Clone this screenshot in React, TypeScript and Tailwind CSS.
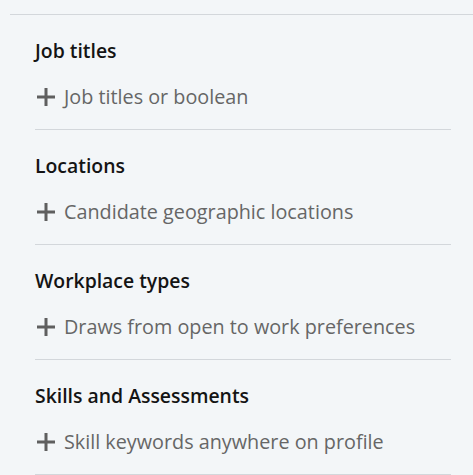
import React from "react";

const sections = [
  { title: "Job titles", hint: "Job titles or boolean" },
  { title: "Locations", hint: "Candidate geographic locations" },
  { title: "Workplace types", hint: "Draws from open to work preferences" },
  { title: "Skills and Assessments", hint: "Skill keywords anywhere on profile" },
];

function Plus() {
  return (
    <svg width="18" height="18" viewBox="0 0 18 18" className="shrink-0">
      <rect x="0" y="7.5" width="18" height="3" fill="#5f5f5f" />
      <rect x="7.5" y="0" width="3" height="18" fill="#5f5f5f" />
    </svg>
  );
}

export default function App() {
  return (
    <div
      className="h-[475px] w-[473px] overflow-hidden bg-[#f3f6f8] pt-[14px] pl-[10px]"
      style={{ fontFamily: '"Open Sans", "Noto Sans", sans-serif' }}
    >
      <div className="border-t border-[#d3d7db] pl-[25px] pr-[22px]">
        {sections.map((s) => (
          <div key={s.title} className="h-[115px] border-b border-[#d3d7db] pt-[24px]">
            <div className="text-[19.4px] font-semibold leading-[24px] text-[#141414]">{s.title}</div>
            <div className="mt-[22px] flex h-[24px] items-center gap-[9px] pl-[2px]">
              <Plus />
              <span className="text-[19.8px] leading-[24px] text-[#666666]">{s.hint}</span>
            </div>
          </div>
        ))}
      </div>
    </div>
  );
}
